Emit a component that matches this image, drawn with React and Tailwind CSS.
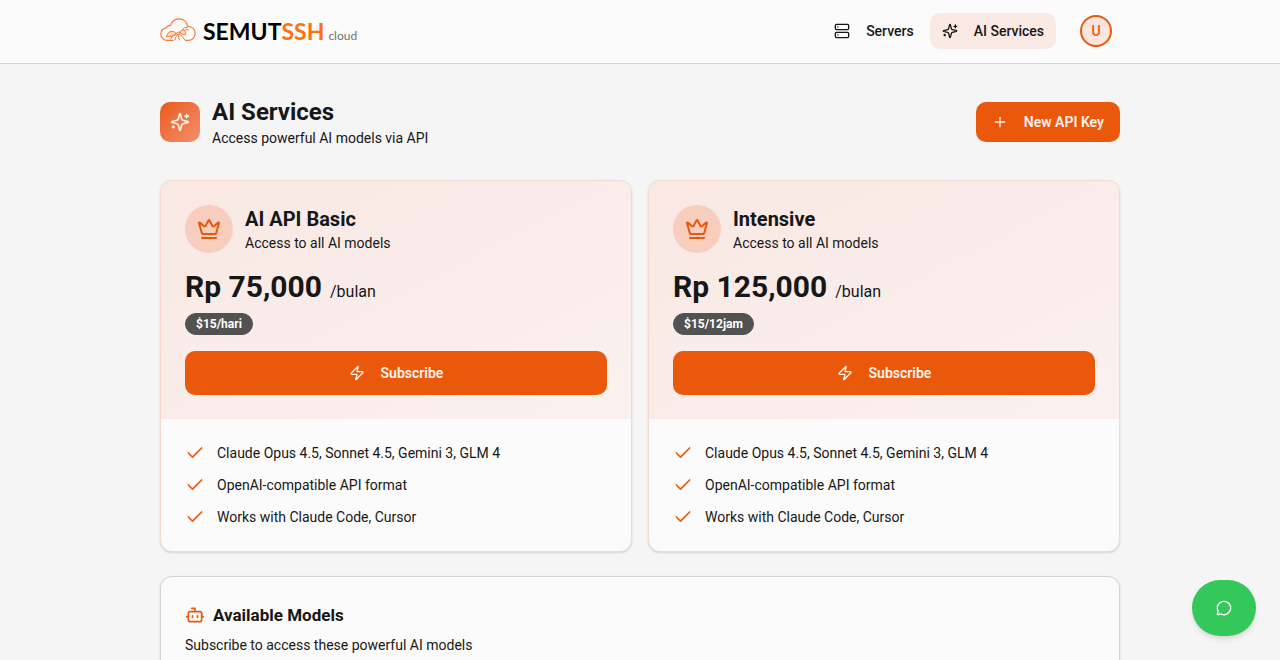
import { Server, Crown, Zap, Check, Plus, Bot, MessageCircle } from "lucide-react";

const plans = [
  { name: "AI API Basic", price: "Rp 75,000", limit: "$15/hari" },
  { name: "Intensive", price: "Rp 125,000", limit: "$15/12jam" },
];

const features = [
  "Claude Opus 4.5, Sonnet 4.5, Gemini 3, GLM 4",
  "OpenAI-compatible API format",
  "Works with Claude Code, Cursor",
];

function SparklesIcon({ className }) {
  return (
    <svg
      viewBox="0 0 24 24"
      fill="none"
      stroke="currentColor"
      strokeWidth="2"
      strokeLinecap="round"
      strokeLinejoin="round"
      className={className}
      aria-hidden="true"
    >
      <path d="M9.937 15.5A2 2 0 0 0 8.5 14.063l-6.135-1.582a.5.5 0 0 1 0-.962L8.5 9.936A2 2 0 0 0 9.937 8.5l1.582-6.135a.5.5 0 0 1 .963 0L14.063 8.5A2 2 0 0 0 15.5 9.937l6.135 1.581a.5.5 0 0 1 0 .964L15.5 14.063a2 2 0 0 0-1.437 1.437l-1.582 6.135a.5.5 0 0 1-.963 0z" />
      <path d="M20 3v4" />
      <path d="M22 5h-4" />
      <path d="M4 17v2" />
      <path d="M5 18H3" />
    </svg>
  );
}

function CloudLogo() {
  return (
    <svg viewBox="0 0 36 26" fill="none" stroke="#f47b35" strokeLinecap="round" strokeLinejoin="round" className="h-[26px] w-9" aria-hidden="true">
      {/* cloud */}
      <path
        strokeWidth="1.2"
        d="M13 22.4H7.5C3.6 22.4 .8 19.8 .8 16.2C.8 12.6 3.2 10.2 6.6 9.8C7.2 8.2 8.6 7.3 10.6 7.3C11.8 3.3 15 .8 19 .8C23.6 .8 27 3.8 27.6 8.3C32.2 8.5 35.2 11.2 35.2 15.2C35.2 19.4 32.2 22.4 28.2 22.4H25.5"
      />
      {/* ant */}
      <g strokeWidth="1" fill="#fbd9c4">
        <path d="M6.8 18.4C6.8 15.4 9 13.4 12 13.4C14.4 13.4 15.6 14.4 16 15.6C14.2 17.6 10.6 19 6.8 18.4Z" />
        <path d="M16 15.6C17 13.8 19 13.6 20.4 15C19.4 17 17.4 17.2 16 15.6Z" />
        <path d="M20 14.2C20.4 12 22.6 11.4 24.6 12.6C25.6 14 26 15.4 25.4 16.6C23.4 16.8 20.8 16.4 20 14.2Z" />
      </g>
      <g strokeWidth="1">
        <path d="M22.6 11.8L24.2 9.8L27 9.4" />
        <path d="M24.6 12.4L26.4 11.2L28.4 12" />
        <path d="M15.6 16.6L11.8 18.8L10.8 21" />
        <path d="M17.2 17L15.4 19.6L15.2 22" />
        <path d="M18.6 17L18.6 19.6L19.6 22" />
        <path d="M19.8 16.2L22.4 18.6L24.6 21.8" />
      </g>
    </svg>
  );
}

function PlanCard({ plan }) {
  return (
    <div className="overflow-hidden rounded-xl border border-[#f5d8cf] bg-[#fbfbfb] shadow-sm">
      <div className="bg-linear-to-br from-[#f9e8e3] to-[#faf1ef] p-6">
        <div className="flex items-center gap-3">
          <div className="flex size-12 items-center justify-center rounded-full bg-[#f7cdbe]">
            <Crown className="size-6 text-[#ea580c]" />
          </div>
          <div>
            <h2 className="text-xl font-bold">{plan.name}</h2>
            <p className="text-sm">Access to all AI models</p>
          </div>
        </div>
        <div className="mt-4 flex items-baseline gap-2">
          <span className="text-3xl font-bold">{plan.price}</span>
          <span>/bulan</span>
        </div>
        <div className="mt-2 flex">
          <span className="rounded-full border border-[#525252] bg-[#525252] px-2.5 py-0.5 text-xs font-bold text-white">
            {plan.limit}
          </span>
        </div>
        <button className="mt-4 flex h-11 w-full items-center justify-center gap-4 rounded-[10px] bg-[#ea580c] text-sm font-semibold text-[#fff3ec] hover:bg-[#d94f08]">
          <Zap className="size-4" />
          Subscribe
        </button>
      </div>
      <ul className="flex flex-col gap-3 p-6">
        {features.map((feature) => (
          <li key={feature} className="flex items-center gap-3 text-sm">
            <Check className="size-5 text-[#ea580c]" />
            {feature}
          </li>
        ))}
      </ul>
    </div>
  );
}

export default function App() {
  return (
    <div className="min-h-screen bg-[#f5f5f5] font-['Roboto',sans-serif] text-[#171717]">
      <header className="border-b border-[#d4d4d4] bg-[#fbfbfb]">
        <div className="mx-auto flex h-[63px] max-w-5xl items-center justify-between px-8 pb-px">
          <a href="#" className="flex items-center gap-[7px]">
            <CloudLogo />
            <span className="flex items-baseline gap-1 font-['Lato',sans-serif]">
              <span className="text-[23px] font-bold text-black">
                SEMUT<span className="text-[#fb7211]">SSH</span>
              </span>
              <span className="text-xs text-[#737373]">cloud</span>
            </span>
          </a>
          <div className="flex items-center gap-6 pr-2">
            <nav className="flex items-center gap-1">
              <a href="#" className="flex h-9 items-center gap-4 rounded-[10px] px-3 text-sm font-medium">
                <Server className="size-4" />
                Servers
              </a>
              <a href="#" className="flex h-9 items-center gap-4 rounded-[10px] bg-[#fae9e5] px-3 text-sm font-medium">
                <SparklesIcon className="size-4" />
                AI Services
              </a>
            </nav>
            <button className="size-8 rounded-full border-2 border-[#ea580c] bg-[#fae5df] text-sm font-medium text-[#ea580c]">
              U
            </button>
          </div>
        </div>
      </header>

      <main className="mx-auto max-w-5xl px-8 py-8">
        <div className="flex items-center justify-between">
          <div className="flex items-center gap-3">
            <div className="flex size-10 items-center justify-center rounded-[10px] bg-linear-to-br from-[#ea580c] to-[#f28f6b]">
              <SparklesIcon className="size-5 text-[#fff3ec]" />
            </div>
            <div>
              <h1 className="text-2xl font-bold">AI Services</h1>
              <p className="text-sm">Access powerful AI models via API</p>
            </div>
          </div>
          <button className="flex h-10 items-center gap-4 rounded-[10px] bg-[#ea580c] px-4 text-sm font-semibold text-[#fff3ec] hover:bg-[#d94f08]">
            <Plus className="size-4" />
            New API Key
          </button>
        </div>

        <div className="mt-8 grid grid-cols-2 gap-4">
          {plans.map((plan) => (
            <PlanCard key={plan.name} plan={plan} />
          ))}
        </div>

        <section className="mt-6 rounded-xl border border-[#d4d4d4] bg-[#fbfbfb] p-6 shadow-sm">
          <h2 className="flex items-center gap-2 text-[17px] leading-7 font-bold">
            <Bot className="size-5 text-[#ea580c]" />
            Available Models
          </h2>
          <p className="mt-1.5 text-sm">Subscribe to access these powerful AI models</p>
        </section>
      </main>

      <button
        aria-label="Chat"
        className="fixed right-6 bottom-6 flex h-14 w-16 items-center justify-center rounded-full bg-[#34c759] text-white shadow-md"
      >
        <MessageCircle className="size-4" />
      </button>
    </div>
  );
}
